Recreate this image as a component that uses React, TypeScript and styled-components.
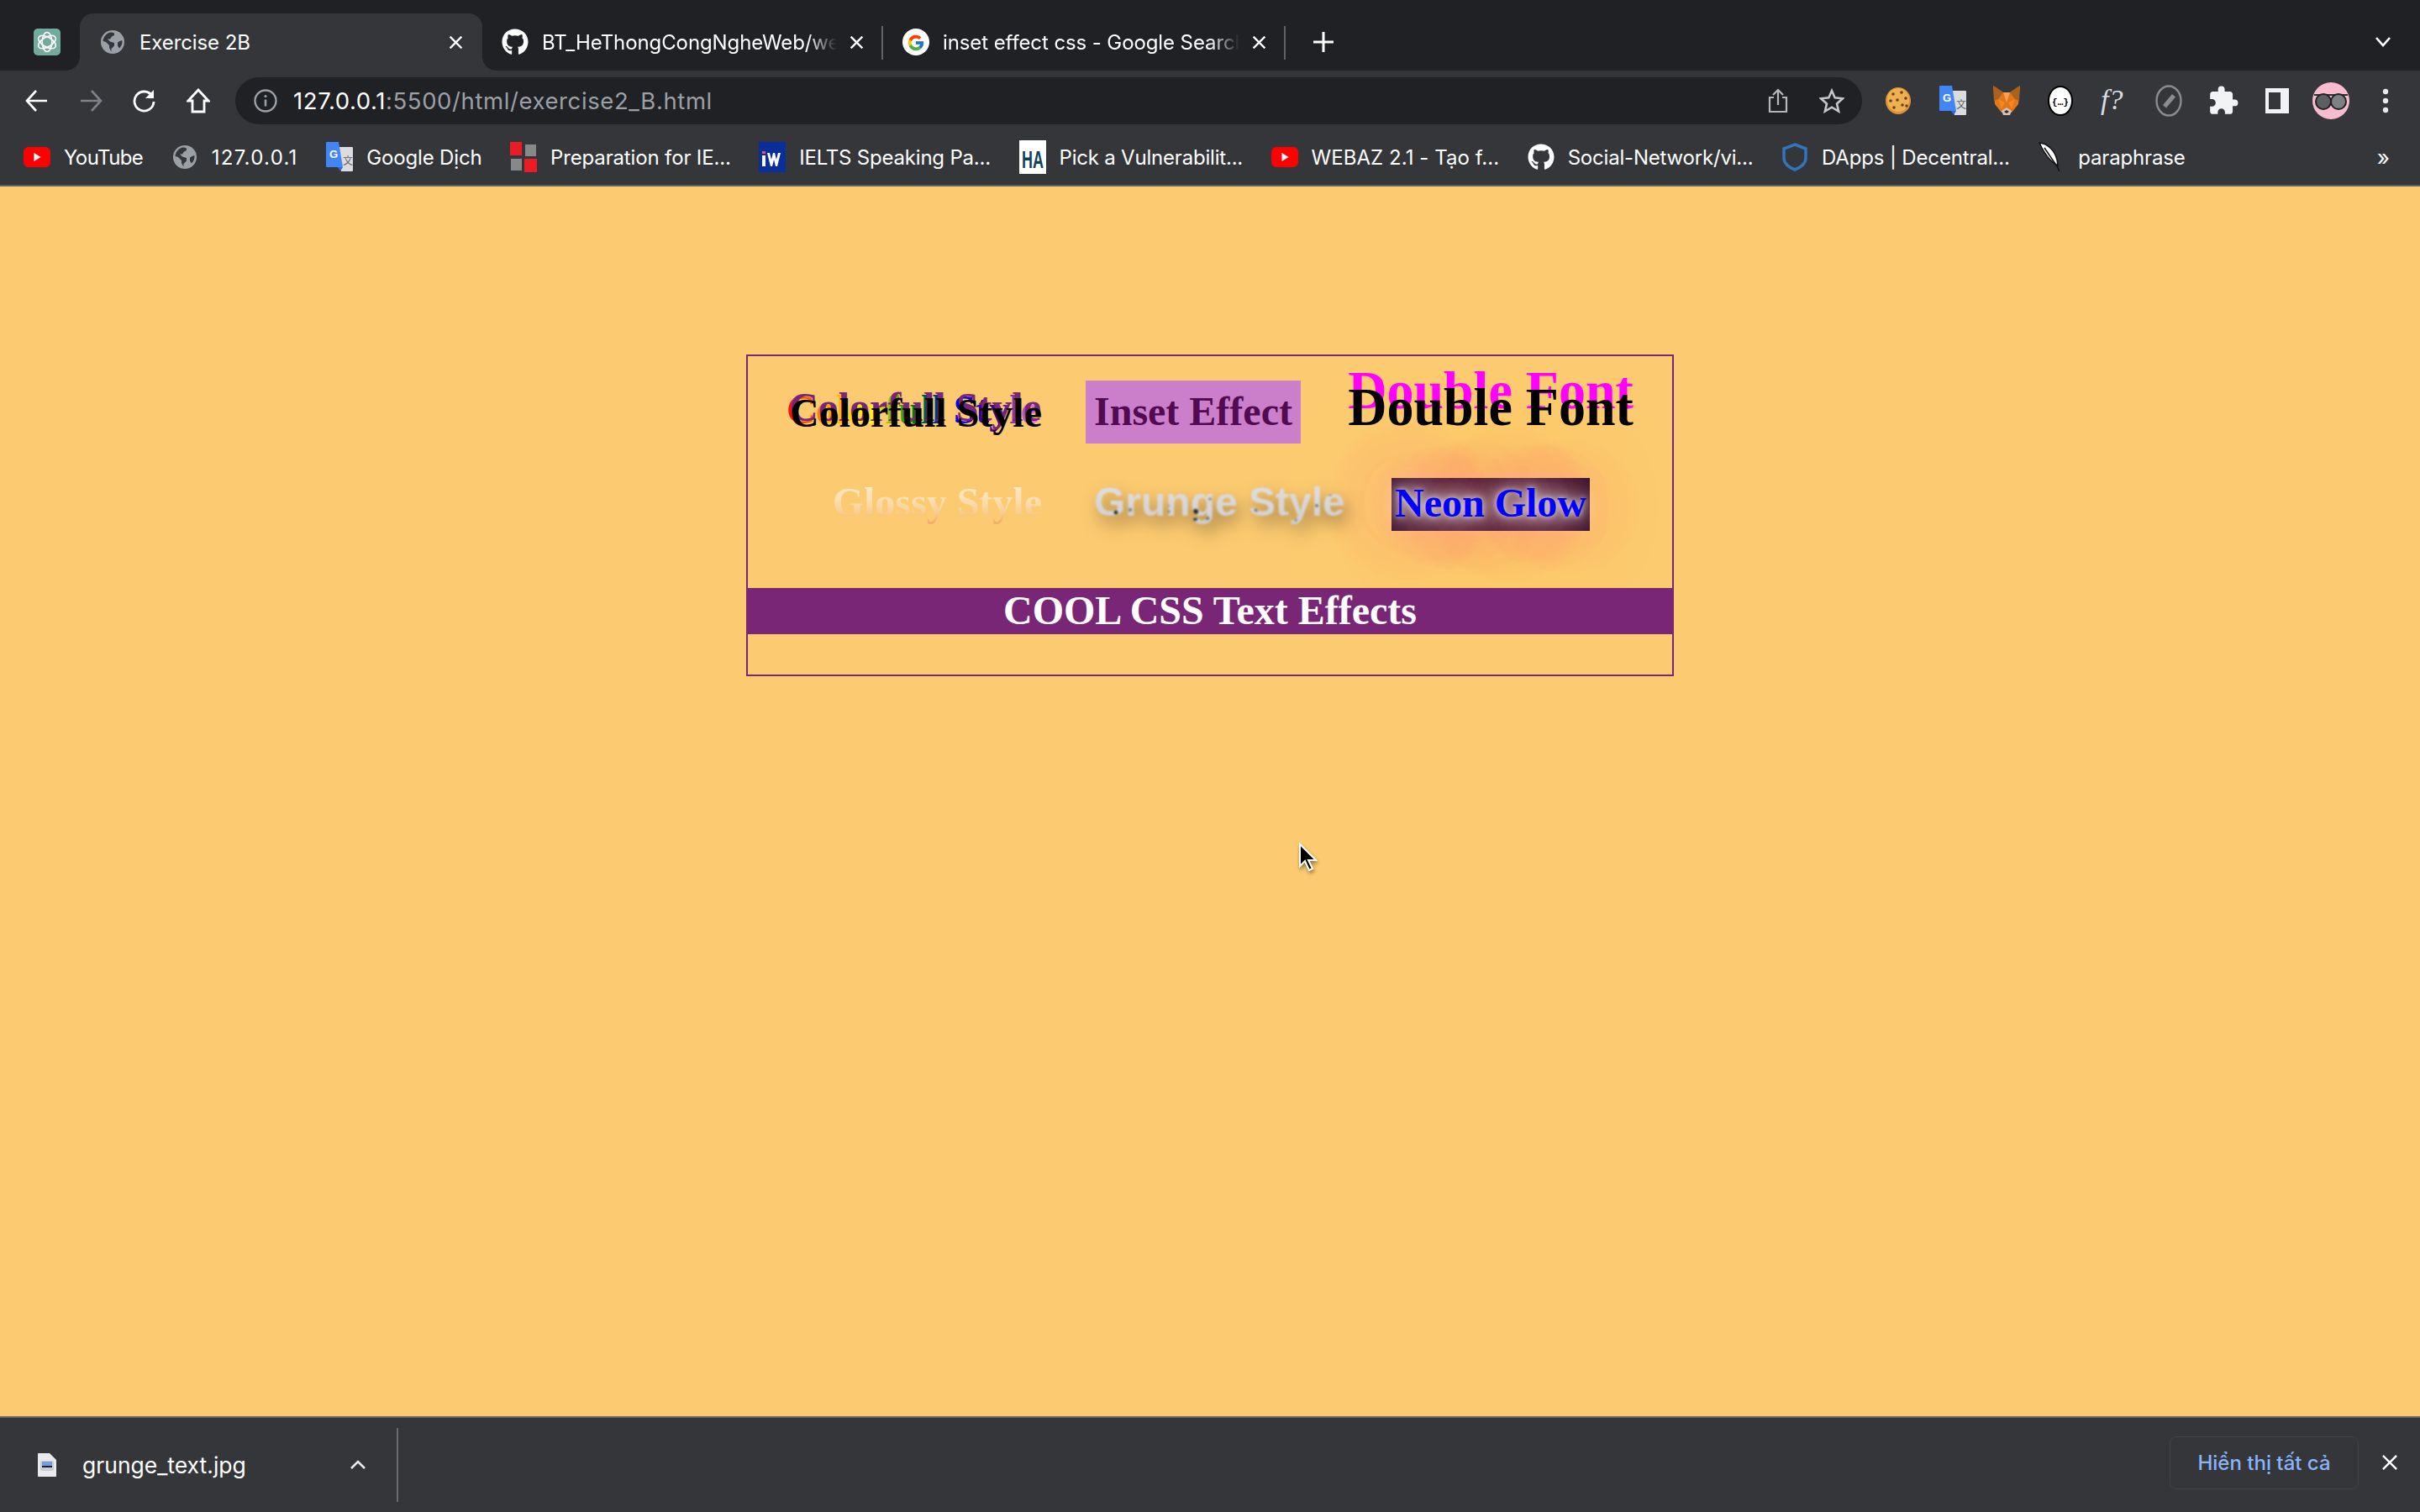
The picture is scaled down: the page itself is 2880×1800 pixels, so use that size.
import React from 'react';
import styled, { createGlobalStyle } from 'styled-components';
import { FaGithub } from 'react-icons/fa';
import { FcGoogle } from 'react-icons/fc';
import { MdExtension } from 'react-icons/md';

const pageColor = '#fcca70';

const Global = createGlobalStyle`
  html, body { margin: 0; padding: 0; height: 100%; }
  body { background: ${pageColor}; font-family: Inter, "Noto Sans", sans-serif; overflow: hidden; }
  #root { height: 100%; }
`;

const serif = `"Liberation Serif", "Times New Roman", serif`;

const Window = styled.div`
  position: relative; width: 2880px; height: 1800px; display: flex; flex-direction: column; background: ${pageColor};
`;
const TabStrip = styled.div`
  height: 84px; box-sizing: border-box; background: #202124; padding-top: 16px; display: flex; align-items: stretch;
`;
const PinnedTab = styled.div`
  width: 95px; box-sizing: border-box; padding-left: 40px; padding-top: 18px;
`;
const Tab = styled.div<{ $active?: boolean; $width: number; $divider?: boolean }>`
  position: relative; width: ${p => p.$width}px; box-sizing: border-box; display: flex; align-items: center; gap: 16px;
  padding: 0 24px 0 23px; color: #fff; font-size: 24px; letter-spacing: -0.1px;
  background: ${p => (p.$active ? '#35363a' : 'transparent')};
  border-radius: ${p => (p.$active ? '16px 16px 0 0' : '0')};
  ${p => p.$divider ? `&::after { content: ''; position: absolute; right: 0; top: 15px; width: 2px; height: 40px; background: #5f6368; }` : ''}
`;
const Flare = styled.span<{ $side: 'left' | 'right' }>`
  position: absolute; bottom: 0; ${p => p.$side}: -16px; width: 16px; height: 16px;
  background: radial-gradient(circle at ${p => (p.$side === 'left' ? '0 0' : '100% 0')}, transparent 15.5px, #35363a 16px);
`;
const TabIcon = styled.span`
  width: 32px; height: 32px; flex: none; display: flex; align-items: center; justify-content: center; color: #fff;
`;
const TabTitle = styled.span<{ $fade?: boolean }>`
  flex: 1; min-width: 0; white-space: nowrap; overflow: hidden;
  ${p => p.$fade ? `-webkit-mask-image: linear-gradient(to right, #000 90%, transparent 100%); mask-image: linear-gradient(to right, #000 90%, transparent 100%);` : ''}
`;
const NewTab = styled.div`
  width: 90px; display: flex; align-items: center; justify-content: center;
`;
const StripEnd = styled.div`
  flex: 1; display: flex; align-items: center; justify-content: flex-end; padding-right: 34px;
`;
const Toolbar = styled.div`
  height: 64px; box-sizing: border-box; background: #35363a; display: flex; align-items: flex-start; padding-top: 8px;
`;
const NavButton = styled.span`
  width: 64px; height: 56px; flex: none; display: flex; align-items: center; justify-content: center;
`;
const NavGroup = styled.div`
  display: flex; padding-left: 12px; width: 280px; box-sizing: border-box; flex: none;
`;
const Omnibox = styled.div`
  width: 1936px; height: 56px; box-sizing: border-box; border-radius: 28px; background: #202124; display: flex; align-items: center;
  padding: 0 4px 0 22px; margin-right: 11px; flex: none;
`;
const UrlText = styled.div`
  flex: 1; margin-left: 19px; font-size: 27.5px; letter-spacing: 0.6px; color: #fff; white-space: nowrap;
`;
const UrlDim = styled.span`
  color: #9aa0a6;
`;
const OmniAction = styled.span`
  width: 64px; height: 56px; display: flex; align-items: center; justify-content: center;
`;
const ExtButton = styled.span`
  width: 64.4px; height: 56px; flex: none; display: flex; align-items: center; justify-content: center;
`;
const Bookmarks = styled.div`
  height: 74px; box-sizing: border-box; background: #35363a; border-bottom: 2px solid #606164; display: flex; align-items: center;
  padding: 6px 0 0 28px; color: #fff; font-size: 24px;
`;
const Bookmark = styled.div`
  display: flex; align-items: center; gap: 16px; margin-right: 33.5px; white-space: nowrap;
`;
const BookmarkLabel = styled.span<{ $spacing: number }>`
  letter-spacing: ${p => p.$spacing}px;
`;
const BookmarkIcon = styled.span`
  width: 32px; height: 32px; flex: none; display: flex; align-items: center; justify-content: center;
`;
const Chevrons = styled.span`
  margin-left: auto; padding-right: 36px; font-size: 26px;
`;
const Page = styled.main`
  flex: 1; min-height: 0; padding-top: 200px; background: ${pageColor};
`;
const Panel = styled.section`
  width: 1104px; height: 383px; box-sizing: border-box; margin: 0 auto; border: 2px solid #7a2677; display: flex; flex-direction: column;
  font-family: ${serif}; font-weight: bold; font-size: 48px; overflow: visible;
`;
const Effects = styled.div`
  height: 276px; display: grid; grid-template-columns: 350px 364px 340px; grid-template-rows: 116px 120px;
`;
const Cell = styled.div<{ $justify: string; $top: number; $left?: number }>`
  display: flex; justify-content: ${p => p.$justify}; align-items: flex-start; padding-top: ${p => p.$top}px; padding-left: ${p => p.$left ?? 0}px; line-height: 58px;
`;
const Colorful = styled.div`
  position: relative; color: #000; white-space: nowrap;
  &::before, &::after { content: attr(data-text); position: absolute; white-space: nowrap; }
  &::before { left: -4px; top: -4px; z-index: 0; color: transparent; -webkit-background-clip: text; background-clip: text;
    background-image: linear-gradient(to right, red, orange, yellow, green, blue, indigo, violet); }
  &::after { left: -1px; top: -7px; z-index: 1; color: #7a2677; }
`;
const ColorfulTop = styled.span`
  position: relative; z-index: 2;
`;
const Inset = styled.div`
  background: #cb7fca; color: #520a50; padding: 8px 10px 9px; white-space: nowrap;
`;
const DoubleFont = styled.div`
  position: relative; font-size: 64px; line-height: 66px; color: #000; white-space: nowrap;
  &::before { content: attr(data-text); position: absolute; left: 0; top: -20px; color: #ff00ff; z-index: 0; }
`;
const DoubleTop = styled.span`
  position: relative; z-index: 1;
`;
const Glossy = styled.div`
  white-space: nowrap; color: transparent; -webkit-background-clip: text; background-clip: text;
  background-image: linear-gradient(to bottom, #fbeacc 14%, #fbdfb2 45%, #f9cd90 72%, #eeb06c 90%);
`;
const GrungeWrap = styled.div`
  filter: drop-shadow(5px 10px 10px rgba(50,35,20,.5));
`;
const Grunge = styled.div`
  font-family: "Liberation Sans", Arial, sans-serif; font-size: 48px; white-space: nowrap; color: transparent;
  -webkit-background-clip: text; background-clip: text; filter: blur(0.8px);
  background-color: #dcdce0;
  background-image:
    radial-gradient(circle at 26px 41px, #222 0 1.5px, transparent 3px),
    radial-gradient(circle at 43px 38px, #777 0 1px, transparent 3px),
    radial-gradient(circle at 88px 33px, #777 0 1px, transparent 2.5px),
    radial-gradient(circle at 88px 40px, #555 0 1px, transparent 3px),
    radial-gradient(circle at 121px 40px, #222 0 2px, transparent 4px),
    radial-gradient(circle at 120px 48px, #222 0 2px, transparent 4px),
    radial-gradient(circle at 135px 48px, #666 0 1px, transparent 3px),
    radial-gradient(circle at 138px 25px, #888 0 1px, transparent 2.5px),
    radial-gradient(circle at 155px 18px, #999 0 1px, transparent 2.5px),
    radial-gradient(circle at 193px 38px, #777 0 1.5px, transparent 3px),
    radial-gradient(circle at 228px 46px, #888 0 1px, transparent 2.5px),
    radial-gradient(circle at 265px 33px, #666 0 1px, transparent 2.5px),
    radial-gradient(circle at 281px 20px, #888 0 1px, transparent 2.5px),
    radial-gradient(circle at 240px 50px, #888 0 1px, transparent 2.5px),
    linear-gradient(to bottom, #e2e2e4, #cdcdd3);
`;
const Neon = styled.div`
  position: relative; z-index: 1; background: #2a0c2c; color: #0000ff; padding: 1px 4px 4px; white-space: nowrap;
  text-shadow: 0 0 6px rgba(255,255,255,.5), 0 0 12px rgba(255,255,255,.5), 0 0 20px rgba(255,255,255,.5), 0 0 30px rgba(255,255,255,.55), 0 0 44px rgba(255,235,235,.6),
    0 0 70px #ff8f90, 0 0 90px #ff8090, 0 0 110px #ff8090, 0 0 130px #ff8088, 0 0 150px #ff8088, 0 0 170px #ff8080, 0 0 190px #ff8a78;
`;
const TitleBar = styled.h1`
  position: relative; z-index: 2; margin: 0; height: 55px; background: #7a2677; color: #fff; font-size: 48px; line-height: 53px; text-align: center; font-weight: bold;
`;
const DownloadBar = styled.footer`
  height: 114px; box-sizing: border-box; background: #35363a; border-top: 2px solid #626366; display: flex; align-items: center; color: #fff;
`;
const FileItem = styled.div`
  width: 472px; box-sizing: border-box; display: flex; align-items: center; padding-left: 45px; gap: 31px; font-size: 26.5px;
`;
const FileName = styled.span`
  flex: 1;
`;
const ItemSeparator = styled.span`
  width: 2px; height: 88px; background: #6a6b6e;
`;
const ShowAll = styled.div`
  margin-left: auto; width: 225px; height: 63px; box-sizing: border-box; border: 1px solid #414246; border-radius: 8px; color: #8ab4f8;
  display: flex; align-items: center; justify-content: center; font-size: 24px; font-weight: 500; margin-top: -6px;
`;
const DownloadClose = styled.span`
  width: 73px; display: flex; justify-content: center; margin-top: -6px;
`;
const Cursor = styled.svg`
  position: absolute; left: 1544px; top: 1003px; filter: drop-shadow(1px 3px 2px rgba(0,0,0,.4));
`;

const X = ({ size = 15, w = 2.4, c = '#fff' }: { size?: number; w?: number; c?: string }) => (
  <svg width={size} height={size} viewBox="0 0 15 15"><path d="M1.5 1.5l12 12M13.5 1.5l-12 12" stroke={c} strokeWidth={w} strokeLinecap="square" fill="none" /></svg>
);
const Globe = ({ s = 28 }: { s?: number }) => (
  <svg width={s} height={s} viewBox="0 0 28 28">
    <circle cx="14" cy="14" r="14" fill="#9aa0a6" />
    <path d="M12.5 2.5C7 3 3 7.500 2.500 13l3.500 1 3 3 1 1v3l2.500 4.500V22l3.500-3.500v-3.500l-5-1.500-3-3h3l2-3 3-1.500V3.500C14.500 3 13.500 2.500 12.500 2.500zM25 12l-2.500 1-2.500 1.500v4l2 3c2-2 3.500-5 3.500-8 0-.5 0-1-.5-1.500z" fill="#35363a" />
  </svg>
);
const ChatGpt = () => (
  <svg width="32" height="32" viewBox="0 0 32 32">
    <rect width="32" height="32" rx="5" fill="#74aa9c" />
    <g fill="none" stroke="#fff" strokeWidth="1.500">
      <ellipse cx="16" cy="16" rx="5.800" ry="11.500" />
      <ellipse cx="16" cy="16" rx="5.800" ry="11.500" transform="rotate(60 16 16)" />
      <ellipse cx="16" cy="16" rx="5.800" ry="11.500" transform="rotate(120 16 16)" />
    </g>
  </svg>
);
const Youtube = () => (
  <svg width="32" height="24" viewBox="0 0 32 24"><rect width="32" height="24" rx="6" fill="#f00" /><path d="M12.500 7l8 5-8 5z" fill="#fff" /></svg>
);
const Translate = ({ s = 32 }: { s?: number }) => (
  <svg width={s} height={s + 4} viewBox="0 0 32 36">
    <path d="M14 6h17a1 1 0 011 1v27a1 1 0 01-1 1H18l-4-29z" fill="#dadce0" />
    <path d="M1 0h14l5 30H1a1 1 0 01-1-1V1a1 1 0 011-1z" fill="#4285f4" />
    <path d="M14 30h6l-3 5z" fill="#3367d6" />
    <text x="4" y="19" fontFamily="Liberation Sans, sans-serif" fontSize="13" fontWeight="bold" fill="#fff">G</text>
    <text x="20" y="27" fontFamily="Noto Sans CJK SC, sans-serif" fontSize="12" fill="#5f6368">文</text>
  </svg>
);
const Squares = () => (
  <svg width="32" height="36" viewBox="0 0 32 36">
    <rect x="0" y="0" width="14" height="16" fill="#ed1c24" /><rect x="18" y="3" width="13" height="14" fill="#888" />
    <rect x="1" y="20" width="13" height="14" fill="#888" /><rect x="17" y="20" width="15" height="16" fill="#ed1c24" />
  </svg>
);
const Ielts = () => (
  <svg width="32" height="36" viewBox="0 0 32 36">
    <rect width="32" height="36" fill="#0a2f9c" />
    <path d="M4 16h4v13H4zM10 13l4 16h2l2-8 2 8h2l4-16h-3l-2 8-2-8h-2l-2 8-2-8z" fill="#fff" />
    <rect x="4" y="11" width="4" height="3" fill="#ef4f5f" />
  </svg>
);
const HaLogo = () => (
  <svg width="32" height="40" viewBox="0 0 32 40">
    <rect width="32" height="40" fill="#fff" />
    <text x="16" y="33" textAnchor="middle" fontFamily="Liberation Sans, sans-serif" fontWeight="bold" fontSize="30" textLength="26" lengthAdjust="spacingAndGlyphs" fill="#0d4358">HA</text>
  </svg>
);
const Shield = () => (
  <svg width="30" height="34" viewBox="0 0 30 34">
    <path d="M15 2l13 5v11c0 7-7 12-13 14C9 30 2 25 2 18V7z" fill="none" stroke="#3375bb" strokeWidth="3.500" />
  </svg>
);
const Quill = () => (
  <svg width="30" height="36" viewBox="0 0 30 36">
    <path d="M1 1c10 1 18 9 21 20l1 7C15 24 7 14 1 1z" fill="#fff" stroke="#111" strokeWidth="1.500" />
    <path d="M7 7l15 22 3 6" fill="none" stroke="#111" strokeWidth="1.500" />
  </svg>
);
const Back = ({ c = '#fff' }: { c?: string }) => (
  <svg width="28" height="28" viewBox="0 0 28 28"><path d="M26 14H3M13 2L2 14l11 12" fill="none" stroke={c} strokeWidth="2.600" /></svg>
);
const Forward = () => (
  <svg width="28" height="28" viewBox="0 0 28 28"><path d="M2 14h23M15 2l11 12-11 12" fill="none" stroke="#7e8185" strokeWidth="2.600" /></svg>
);
const Reload = () => (
  <svg width="28" height="28" viewBox="0 0 28 28"><path d="M23 8A11.500 11.500 0 1025 15" fill="none" stroke="#fff" strokeWidth="2.800" /><path d="M25 1v10H15z" fill="#fff" /></svg>
);
const Home = () => (
  <svg width="28" height="30" viewBox="0 0 28 30"><path d="M14 2L2 15h5v13h14V15h5z" fill="none" stroke="#fff" strokeWidth="2.800" /></svg>
);
const Info = () => (
  <svg width="28" height="28" viewBox="0 0 28 28"><circle cx="14" cy="14" r="12.500" fill="none" stroke="#9aa0a6" strokeWidth="2.400" /><path d="M14 12.500v8" stroke="#9aa0a6" strokeWidth="2.600" /><circle cx="14" cy="8.500" r="1.600" fill="#9aa0a6" /></svg>
);
const Share = () => (
  <svg width="24" height="30" viewBox="0 0 24 30"><path d="M12 20V2M6 8l6-6 6 6M7 11H2v17h20V11h-5" fill="none" stroke="#b5b7ba" strokeWidth="2.200" /></svg>
);
const Star = () => (
  <svg width="30" height="30" viewBox="0 0 30 30"><path d="M15 3l3.700 8.400 9.300.9-7 6.100 2.100 9.100L15 22.700l-8.100 4.800L9 18.400 2 12.300l9.300-.9z" fill="none" stroke="#c4c6c8" strokeWidth="2.600" /></svg>
);
const Cookie = () => (
  <svg width="30" height="32" viewBox="0 0 30 32">
    <ellipse cx="15" cy="16" rx="15" ry="16" fill="#d9933a" /><ellipse cx="15" cy="15" rx="13" ry="14" fill="#eeb14f" />
    {[[9, 8], [19, 6], [24, 13], [6, 16], [14, 15], [20, 21], [10, 24], [25, 22]].map(([x, y]) => <circle key={`${x}-${y}`} cx={x} cy={y} r="1.800" fill="#6d3f15" />)}
  </svg>
);
const Fox = () => (
  <svg width="32" height="36" viewBox="0 0 32 36">
    <path d="M0 0l12 8h8L32 0l-2 22-8 10h-12L2 22z" fill="#e2761b" /><path d="M0 0l12 8-6 8-5 2zM32 0L20 8l6 8 5 2z" fill="#a8611e" />
    <path d="M6 16l8 4-4 8zM26 16l-8 4 4 8z" fill="#f6851b" /><path d="M12 8h8l-4 12z" fill="#f6a15a" />
    <path d="M10 30l6-4 6 4-2 5h-8z" fill="#d7c1b3" /><path d="M13 31l3-2 3 2-3 2z" fill="#233447" />
  </svg>
);
const JsonExt = () => (
  <svg width="30" height="36" viewBox="0 0 30 36">
    <ellipse cx="15" cy="18" rx="14" ry="17" fill="#fff" stroke="#000" strokeWidth="2" />
    <text x="15" y="23" textAnchor="middle" fontFamily="Liberation Mono, monospace" fontSize="11" fontWeight="bold" fill="#000">{'{…}'}</text>
  </svg>
);
const FontExt = () => (
  <svg width="36" height="40" viewBox="0 0 36 40">
    <text x="1" y="30" fontFamily="Liberation Serif, serif" fontStyle="italic" fontSize="34" fill="#dadce0">f?</text>
  </svg>
);
const RulerExt = () => (
  <svg width="32" height="38" viewBox="0 0 32 38">
    <ellipse cx="16" cy="19" rx="14.500" ry="17.500" fill="none" stroke="#8a8c90" strokeWidth="2.400" />
    <path d="M9 24l11-13 4 3.500-11 13z" fill="#8a8c90" />
  </svg>
);
const SidePanel = () => (
  <svg width="28" height="30" viewBox="0 0 28 30"><rect width="28" height="30" fill="#f1f3f4" /><rect x="4" y="5" width="14" height="20" fill="#35363a" /></svg>
);
const Avatar = () => (
  <svg width="44" height="44" viewBox="0 0 44 44">
    <circle cx="22" cy="22" r="22" fill="#f8bbd0" />
    <path d="M2 15h40" stroke="#333" strokeWidth="2" />
    <circle cx="13" cy="23" r="9" fill="#5b6063" stroke="#222" strokeWidth="2" /><circle cx="31" cy="23" r="9" fill="#7c8184" stroke="#222" strokeWidth="2" />
    <path d="M22 19v3" stroke="#222" strokeWidth="2" />
  </svg>
);
const Dots = () => (
  <svg width="8" height="30" viewBox="0 0 8 30"><circle cx="4" cy="4" r="3.200" fill="#e8eaed" /><circle cx="4" cy="15" r="3.200" fill="#e8eaed" /><circle cx="4" cy="26" r="3.200" fill="#e8eaed" /></svg>
);
const FileIcon = () => (
  <svg width="22" height="28" viewBox="0 0 22 28">
    <path d="M1 0h13l8 8v19a1 1 0 01-1 1H1a1 1 0 01-1-1V1a1 1 0 011-1z" fill="#e8eaed" />
    <rect x="3" y="9" width="16" height="12" rx="2" fill="#c9ced3" /><rect x="5" y="10" width="12" height="5" fill="#6f9fe0" />
    <rect x="5" y="15" width="12" height="2" fill="#222" />
  </svg>
);

const bookmarks: [React.ReactNode, string, number][] = [
  [<Youtube />, 'YouTube', -0.6],
  [<Globe />, '127.0.0.1', 1.3],
  [<Translate />, 'Google Dịch', -0.15],
  [<Squares />, 'Preparation for IE...', -0.15],
  [<Ielts />, 'IELTS Speaking Pa...', -0.2],
  [<HaLogo />, 'Pick a Vulnerabilit...', -0.2],
  [<Youtube />, 'WEBAZ 2.1 - Tạo f...', 0.05],
  [<FaGithub size={32} color="#fff" />, 'Social-Network/vi...', -0.2],
  [<Shield />, 'DApps | Decentral...', -0.15],
  [<Quill />, 'paraphrase', -0.15],
];

export default function App() {
  return (
    <Window>
      <Global />
      <TabStrip>
        <PinnedTab><ChatGpt /></PinnedTab>
        <Tab $active $width={479}>
          <Flare $side="left" /><Flare $side="right" />
          <TabIcon><Globe /></TabIcon>
          <TabTitle>Exercise 2B</TabTitle>
          <X />
        </Tab>
        <Tab $width={477} $divider>
          <TabIcon><FaGithub size={32} /></TabIcon>
          <TabTitle $fade>BT_HeThongCongNgheWeb/website</TabTitle>
          <X />
        </Tab>
        <Tab $width={479} $divider>
          <TabIcon>
            <svg width="32" height="32" viewBox="0 0 32 32"><circle cx="16" cy="16" r="16" fill="#fff" /><foreignObject x="5" y="5" width="22" height="22"><FcGoogle size={22} /></foreignObject></svg>
          </TabIcon>
          <TabTitle $fade>inset effect css - Google Search</TabTitle>
          <X />
        </Tab>
        <NewTab>
          <svg width="24" height="24" viewBox="0 0 24 24"><path d="M12 0v24M0 12h24" stroke="#fff" strokeWidth="3" /></svg>
        </NewTab>
        <StripEnd>
          <svg width="20" height="14" viewBox="0 0 20 14"><path d="M2 2l8 9 8-9" fill="none" stroke="#fff" strokeWidth="2.600" /></svg>
        </StripEnd>
      </TabStrip>
      <Toolbar>
        <NavGroup>
          <NavButton><Back /></NavButton>
          <NavButton><Forward /></NavButton>
          <NavButton><Reload /></NavButton>
          <NavButton><Home /></NavButton>
        </NavGroup>
        <Omnibox>
          <Info />
          <UrlText>127.0.0.1<UrlDim>:5500/html/exercise2_B.html</UrlDim></UrlText>
          <OmniAction><Share /></OmniAction>
          <OmniAction><Star /></OmniAction>
        </Omnibox>
        <ExtButton><Cookie /></ExtButton>
        <ExtButton><Translate /></ExtButton>
        <ExtButton><Fox /></ExtButton>
        <ExtButton><JsonExt /></ExtButton>
        <ExtButton><FontExt /></ExtButton>
        <ExtButton><RulerExt /></ExtButton>
        <ExtButton><MdExtension size={38} color="#f1f3f4" /></ExtButton>
        <ExtButton><SidePanel /></ExtButton>
        <ExtButton><Avatar /></ExtButton>
        <ExtButton><Dots /></ExtButton>
      </Toolbar>
      <Bookmarks>
        {bookmarks.map(([icon, label, spacing]) => (
          <Bookmark key={label}><BookmarkIcon>{icon}</BookmarkIcon><BookmarkLabel $spacing={spacing}>{label}</BookmarkLabel></Bookmark>
        ))}
        <Chevrons>»</Chevrons>
      </Bookmarks>
      <Page>
        <Panel>
          <Effects>
            <Cell $justify="flex-end" $top={39}>
              <Colorful data-text="Colorfull Style"><ColorfulTop>Colorfull Style</ColorfulTop></Colorful>
            </Cell>
            <Cell $justify="flex-start" $top={29} $left={52}>
              <Inset>Inset Effect</Inset>
            </Cell>
            <Cell $justify="center" $top={28}>
              <DoubleFont data-text="Double Font"><DoubleTop>Double Font</DoubleTop></DoubleFont>
            </Cell>
            <Cell $justify="flex-end" $top={29}>
              <Glossy>Glossy Style</Glossy>
            </Cell>
            <Cell $justify="flex-start" $top={29} $left={62}>
              <GrungeWrap><Grunge>Grunge Style</Grunge></GrungeWrap>
            </Cell>
            <Cell $justify="center" $top={29}>
              <Neon>Neon Glow</Neon>
            </Cell>
          </Effects>
          <TitleBar>COOL CSS Text Effects</TitleBar>
        </Panel>
      </Page>
      <DownloadBar>
        <FileItem>
          <FileIcon />
          <FileName>grunge_text.jpg</FileName>
          <svg width="20" height="12" viewBox="0 0 20 12" style={{ marginRight: 36 }}><path d="M2 10l8-8 8 8" fill="none" stroke="#e8eaed" strokeWidth="2.600" /></svg>
        </FileItem>
        <ItemSeparator />
        <ShowAll>Hiển thị tất cả</ShowAll>
        <DownloadClose><X size={18} w={2} /></DownloadClose>
      </DownloadBar>
      <Cursor width="24" height="36" viewBox="0 0 24 36">
        <path d="M3 2v26l6-6 5 11 4-2-5-10h9z" fill="#000" stroke="#fff" strokeWidth="2" />
      </Cursor>
    </Window>
  );
}
